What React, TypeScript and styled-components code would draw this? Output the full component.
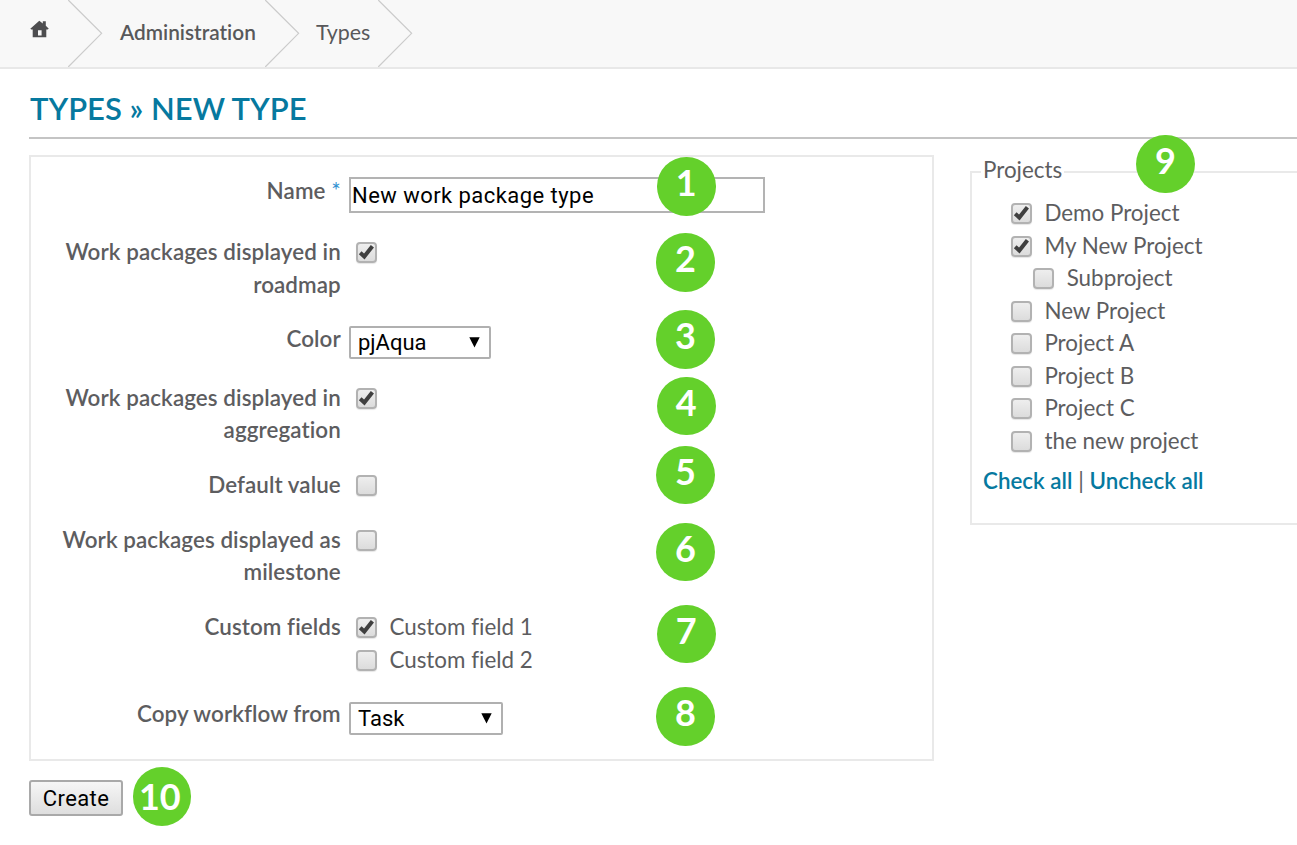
import React from "react";
import styled, { createGlobalStyle } from "styled-components";

const GlobalStyle = createGlobalStyle`
  *, *::before, *::after { box-sizing: border-box; }
  html, body { margin: 0; padding: 0; background: #fff; }
  body {
    font-family: Lato, "Liberation Sans", sans-serif;
    font-size: 22.4px;
    line-height: 32.5px;
    font-variant-ligatures: none;
    color: #5d5d5f;
    overflow: hidden;
  }
`;

const Page = styled.div`
  position: relative;
  width: 1297px;
  height: 845px;
  overflow: hidden;
`;

const Breadcrumb = styled.nav`
  display: flex;
  align-items: flex-start;
  height: 68.5px;
  background: #f8f8f8;
  border-bottom: 2px solid #e8e8e8;
`;

const Crumb = styled.span<{ $width: number; $start: number; $strong?: boolean }>`
  flex: none;
  width: ${(p) => p.$width}px;
  padding: 16px 0 0 ${(p) => p.$start}px;
  font-size: ${(p) => (p.$strong ? 20.8 : 21.4)}px;
  font-weight: ${(p) => (p.$strong ? 600 : 400)};
  color: #58585a;
  white-space: nowrap;
`;

const ChevronSvg = styled.svg`
  flex: none;
  display: block;
  width: 35px;
  height: 67px;
`;

const HomeSvg = styled.svg`
  display: block;
  width: 19px;
  height: 18px;
  margin-top: 4px;
`;

const Title = styled.h1`
  margin: 0 0 0 29px;
  height: 70px;
  padding: 19.5px 0 0 1px;
  border-bottom: 2px solid #c4c4c4;
  font-size: 31px;
  line-height: 40px;
  font-weight: 600;
  color: #06799f;
  white-space: nowrap;
`;

const Columns = styled.main`
  display: flex;
  align-items: flex-start;
  padding: 16.5px 0 0 29px;
`;

const FormPanel = styled.section`
  flex: none;
  width: 905px;
  height: 606px;
  margin-right: 36px;
  padding-top: 17.6px;
  border: 2px solid #e9e9e9;
`;

const Row = styled.div<{ $height: number }>`
  display: grid;
  grid-template-columns: 310px 1fr;
  column-gap: 8px;
  height: ${(p) => p.$height}px;
`;

const Label = styled.div`
  text-align: right;
  font-weight: 600;
  font-size: 22.4px;
  letter-spacing: 0.08px;
  padding-right: 0.2px;
  white-space: nowrap;
`;

const Required = styled.span`
  font-weight: 400;
  color: #3493d2;
`;

const TextInput = styled.input`
  width: 416px;
  height: 36px;
  margin: 2.9px 0 0;
  padding: 0 1px;
  border: 2px solid #b3b3b3;
  background: #fff;
  color: #000;
  font: 22px "Roboto", "Liberation Sans", sans-serif;
  letter-spacing: 0.45px;
  outline: none;
`;

const SelectBox = styled.div<{ $width: number }>`
  display: flex;
  align-items: center;
  justify-content: space-between;
  width: ${(p) => p.$width}px;
  height: 33px;
  margin-top: 3.1px;
  padding: 0 9px 0 7px;
  border: 2px solid #b0b0b0;
  border-radius: 2px;
  color: #000;
  font: 22px "Roboto", "Liberation Sans", sans-serif;
`;

const CheckLine = styled.label<{ $indent?: number }>`
  display: flex;
  align-items: flex-start;
  height: 32.5px;
  padding-left: ${(p) => p.$indent ?? 7}px;
  white-space: nowrap;
`;

const CheckWrap = styled.span`
  flex: none;
  display: grid;
  width: 21px;
  height: 21px;
  margin: 6.3px 12.4px 0 0;
  & > * { grid-area: 1 / 1; }
`;

const CheckInput = styled.input`
  appearance: none;
  width: 21px;
  height: 21px;
  margin: 0;
  border: 2px solid #b2b2b2;
  border-radius: 4px;
  background: linear-gradient(#eeeeee, #dcdcdc);
  box-shadow: 0 1px 1px rgba(0, 0, 0, 0.1);
`;

const CheckSvg = styled.svg`
  width: 21px;
  height: 21px;
  pointer-events: none;
`;

const ProjectsPanel = styled.section`
  flex: none;
  width: 345px;
  height: 354px;
  margin-top: 15.5px;
  padding-left: 11px;
  border: 2px solid #e9e9e9;
`;

const Legend = styled.h2`
  width: max-content;
  margin: -18.3px 0 10.4px -2px;
  padding: 0 2px;
  background: #fff;
  font-size: inherit;
  font-weight: 400;
`;

const Links = styled.div`
  display: flex;
  gap: 5.7px;
  padding-top: 8px;
  font-size: 22.4px;
  white-space: nowrap;
`;

const LinkText = styled.a`
  font-weight: 600;
  color: #06799f;
`;

const Create = styled.button`
  display: block;
  width: 94px;
  height: 36px;
  margin: 19px 0 0 29px;
  padding: 0;
  border: 2px solid #a9a9a9;
  border-radius: 3px;
  background: linear-gradient(#f6f6f6, #dedede);
  color: #000;
  font: 22px "Roboto", "Liberation Sans", sans-serif;
  letter-spacing: 0.4px;
`;

const Badge = styled.span<{ $x: number; $y: number; $wide?: boolean }>`
  position: absolute;
  left: ${(p) => p.$x - 29.25}px;
  top: ${(p) => p.$y - 29.25}px;
  width: 58.5px;
  height: 58.5px;
  padding: ${(p) => (p.$wide ? "0 4px 2px 0" : "0 0 8.5px 0")};
  border-radius: 50%;
  background: #64d02b;
  display: flex;
  align-items: center;
  justify-content: center;
  color: #fff;
  font-size: 36px;
  font-weight: 700;
  line-height: 1;
`;

const Chevron = () => (
  <ChevronSvg viewBox="0 0 35 67" fill="none" stroke="#cbcbcb" strokeWidth="1.2">
    <path d="M0.2 0 L33.6 33.3 L0.2 67" />
  </ChevronSvg>
);

const Home = () => (
  <HomeSvg viewBox="0 0 19 18" fill="#4d4d4f">
    <path
      fillRule="evenodd"
      d="M0.3 8.8 9.3 0.8 12.8 3.6V1.2h3v4.6L18.8 8.8 17.6 9.6H16.3V17.3H2.7V9.6H1.4ZM8 10.2V15.6H11.6V10.2Z"
    />
  </HomeSvg>
);

const Arrow = () => (
  <svg width="11" height="11" viewBox="0 0 11 11">
    <path d="M0.3 0.3H10.7L5.5 10.5Z" fill="#000" />
  </svg>
);

function Check({ on }: { on?: boolean }) {
  return (
    <CheckWrap>
      <CheckInput type="checkbox" defaultChecked={on} />
      {on && (
        <CheckSvg viewBox="0 0 21 21" fill="none" stroke="#3f3f3f" strokeWidth="4">
          <path d="M4.2 10.8 8.3 14.5 16.4 4.2" />
        </CheckSvg>
      )}
    </CheckWrap>
  );
}

const projects = [
  { name: "Demo Project", on: true },
  { name: "My New Project", on: true },
  { name: "Subproject", nested: true },
  { name: "New Project" },
  { name: "Project A" },
  { name: "Project B" },
  { name: "Project C" },
  { name: "the new project" },
];

const markers = [
  [686.3, 186.5],
  [685.5, 262.5],
  [685.5, 339.7],
  [686.3, 406],
  [685.5, 475],
  [685.5, 552],
  [686.3, 634],
  [685.5, 716.5],
  [1165.5, 164],
  [161.8, 796.5],
];

export default function App() {
  return (
    <Page>
      <GlobalStyle />
      <Breadcrumb>
        <Crumb $width={68} $start={30}>
          <Home />
        </Crumb>
        <Chevron />
        <Crumb $width={162} $start={17} $strong>
          Administration
        </Crumb>
        <Chevron />
        <Crumb $width={78} $start={16}>
          Types
        </Crumb>
        <Chevron />
      </Breadcrumb>
      <Title>TYPES » NEW TYPE</Title>
      <Columns>
        <FormPanel>
          <Row $height={61.5}>
            <Label>
              Name <Required>*</Required>
            </Label>
            <TextInput defaultValue="New work package type" />
          </Row>
          <Row $height={87.3}>
            <Label>
              Work packages displayed in
              <br />
              roadmap
            </Label>
            <CheckLine>
              <Check on />
            </CheckLine>
          </Row>
          <Row $height={58.5}>
            <Label>Color</Label>
            <SelectBox $width={142}>
              pjAqua <Arrow />
            </SelectBox>
          </Row>
          <Row $height={87.3}>
            <Label>
              Work packages displayed in
              <br />
              aggregation
            </Label>
            <CheckLine>
              <Check on />
            </CheckLine>
          </Row>
          <Row $height={54.7}>
            <Label>Default value</Label>
            <CheckLine>
              <Check />
            </CheckLine>
          </Row>
          <Row $height={87.3}>
            <Label>
              Work packages displayed as
              <br />
              milestone
            </Label>
            <CheckLine>
              <Check />
            </CheckLine>
          </Row>
          <Row $height={87.3}>
            <Label>Custom fields</Label>
            <div>
              <CheckLine>
                <Check on />
                Custom field 1
              </CheckLine>
              <CheckLine>
                <Check />
                Custom field 2
              </CheckLine>
            </div>
          </Row>
          <Row $height={40}>
            <Label>Copy workflow from</Label>
            <SelectBox $width={154}>
              Task <Arrow />
            </SelectBox>
          </Row>
        </FormPanel>
        <ProjectsPanel>
          <Legend>Projects</Legend>
          {projects.map((p) => (
            <CheckLine key={p.name} $indent={p.nested ? 50.3 : 28}>
              <Check on={p.on} />
              {p.name}
            </CheckLine>
          ))}
          <Links>
            <LinkText>Check all</LinkText>
            <span>|</span>
            <LinkText>Uncheck all</LinkText>
          </Links>
        </ProjectsPanel>
      </Columns>
      <Create>Create</Create>
      {markers.map(([x, y], i) => (
        <Badge key={i} $x={x} $y={y} $wide={i === 9}>
          {i + 1}
        </Badge>
      ))}
    </Page>
  );
}
